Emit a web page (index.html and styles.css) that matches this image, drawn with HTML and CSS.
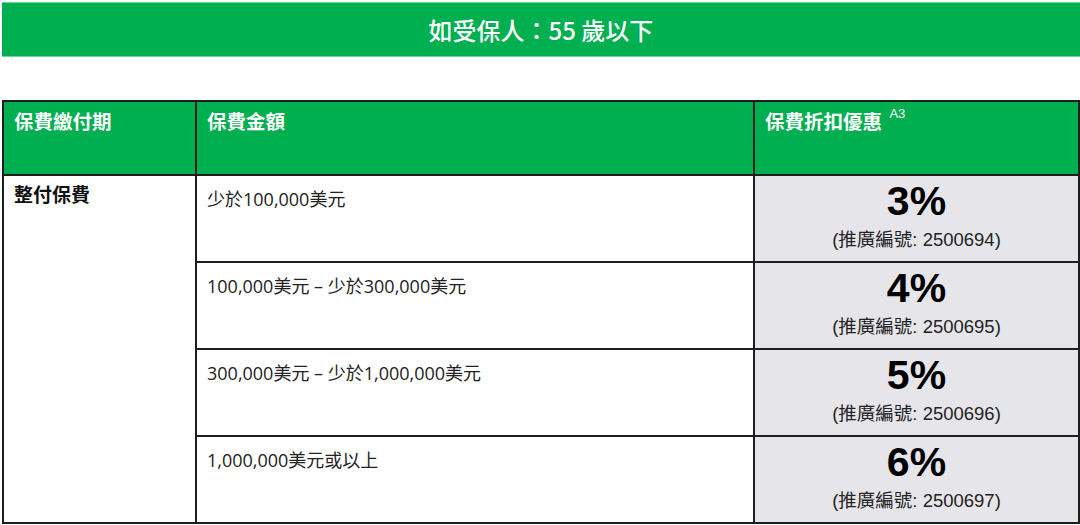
FILE: index.html
```html
<!DOCTYPE html>
<html lang="zh-Hant">
<head>
<meta charset="utf-8">
<link rel="stylesheet" href="styles.css">
</head>
<body>
<div class="banner">如受保人：55 歲以下</div>
<table class="rates">
  <colgroup>
    <col class="c1"><col class="c2"><col class="c3">
  </colgroup>
  <thead>
    <tr>
      <th>保費繳付期</th>
      <th>保費金額</th>
      <th>保費折扣優惠 <sup>A3</sup></th>
    </tr>
  </thead>
  <tbody>
    <tr>
      <td class="term" rowspan="4">整付保費</td>
      <td class="amount">少於100,000美元</td>
      <td class="disc"><div class="pct">3%</div><div class="code">(推廣編號: 2500694)</div></td>
    </tr>
    <tr>
      <td class="amount">100,000美元 – 少於300,000美元</td>
      <td class="disc"><div class="pct">4%</div><div class="code">(推廣編號: 2500695)</div></td>
    </tr>
    <tr>
      <td class="amount">300,000美元 – 少於1,000,000美元</td>
      <td class="disc"><div class="pct">5%</div><div class="code">(推廣編號: 2500696)</div></td>
    </tr>
    <tr>
      <td class="amount">1,000,000美元或以上</td>
      <td class="disc"><div class="pct">6%</div><div class="code">(推廣編號: 2500697)</div></td>
    </tr>
  </tbody>
</table>
</body>
</html>
```
FILE: styles.css
```css
html, body {
  margin: 0;
  padding: 0;
  background: #fff;
}
body {
  padding-top: 2px;
  font-family: "Open Sans", "Noto Sans CJK TC", sans-serif;
  color: #222;
}
.banner {
  margin-left: 2px;
  height: 55px;
  background: #00af50;
  color: #fff;
  font-family: "Noto Sans CJK TC", sans-serif;
  font-size: 24px;
  font-weight: 500;
  display: flex;
  align-items: center;
  justify-content: center;
  border-top: 1px solid #6fd39a;
  border-bottom: 1px solid #6fd39a;
  box-sizing: border-box;
}
.rates {
  margin-top: 43px;
  margin-left: 2px;
  width: 1076px;
  border-collapse: collapse;
  table-layout: fixed;
}
.c1 { width: 193px; }
.c2 { width: 558px; }
.c3 { width: 325px; }
.rates th, .rates td {
  border: 2px solid #1e1e1e;
  vertical-align: top;
  text-align: left;
}
.rates th {
  background: #00af50;
  color: #fff;
  font-family: "Noto Sans CJK TC", sans-serif;
  font-size: 19.5px;
  font-weight: 700;
  height: 74px;
  box-sizing: border-box;
  padding: 6px 10px;
  line-height: 26px;
}
.rates th sup {
  font-family: "Liberation Sans", sans-serif;
  font-size: 13px;
  font-weight: 400;
  vertical-align: 11px;
  line-height: 0;
  margin-left: 3px;
}
.rates td {
  height: 87px;
  box-sizing: border-box;
}
.term {
  font-family: "Noto Sans CJK TC", sans-serif;
  font-size: 19px;
  font-weight: 700;
  color: #111;
  padding: 4px 10px;
  line-height: 28px;
}
.amount {
  font-family: "Open Sans", "Noto Sans CJK TC", sans-serif;
  font-size: 18px;
  color: #222;
  padding: 11px 10px;
  line-height: 24px;
}
.disc {
  background: #e6e6ea;
  text-align: center !important;
  padding: 2px 0 0;
}
.pct {
  font-family: "Liberation Sans", Arial, sans-serif;
  font-weight: 700;
  font-size: 41px;
  line-height: 46px;
  color: #000;
}
.code {
  font-family: "Liberation Sans", "Noto Sans CJK TC", sans-serif;
  font-size: 18.5px;
  line-height: 26px;
  margin-top: 3px;
  color: #222;
}
```
